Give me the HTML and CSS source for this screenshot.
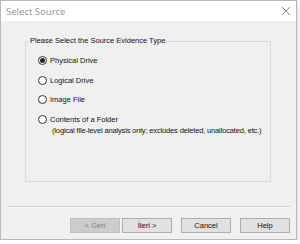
FILE: index.html
```html
<!DOCTYPE html>
<html>
<head>
<meta charset="utf-8">
<link rel="stylesheet" href="styles.css">
</head>
<body>
<div class="window">
  <div class="titlebar">
    <span class="title">Select Source</span>
    <svg class="close" width="10" height="10" viewBox="0 0 10 10"><path d="M1 1L9 9M9 1L1 9" stroke="#8a8a8a" stroke-width="1"/></svg>
  </div>
  <div class="content">
    <div class="group">
      <div class="legend">Please Select the Source Evidence Type</div>
      <div class="options">
        <div class="opt"><span class="radio checked"></span><span>Physical Drive</span></div>
        <div class="opt"><span class="radio"></span><span>Logical Drive</span></div>
        <div class="opt"><span class="radio"></span><span>Image File</span></div>
        <div class="opt"><span class="radio"></span><span>Contents of a Folder</span></div>
        <div class="note">(logical file-level analysis only; excludes deleted, unallocated, etc.)</div>
      </div>
    </div>
    <div class="sep"></div>
    <div class="buttons">
      <div class="pair">
        <button class="btn disabled">&lt; Geri</button>
        <button class="btn">İleri &gt;</button>
      </div>
      <button class="btn">Cancel</button>
      <button class="btn">Help</button>
    </div>
  </div>
</div>
</body>
</html>
```
FILE: styles.css
```css
html, body { margin: 0; padding: 0; background: #ffffff; }
body { font-family: "Liberation Sans", Arial, sans-serif; font-size: 7.5px; color: #111; }
.window {
  width: 297px; height: 240px; box-sizing: border-box;
  border: 1px solid #b8b8b8; background: #f0f0f0;
  display: flex; flex-direction: column;
  box-shadow: 1px 2px 3px rgba(0,0,0,0.15);
}
.titlebar {
  height: 20px; background: #fff; display: flex; align-items: center;
  justify-content: space-between; padding: 0 5px 0 5px;
}
.title { color: #9a9a9a; font-family: "Noto Sans", sans-serif; font-size: 9.5px; }
.content { flex: 1; display: flex; flex-direction: column; padding: 20px 6px 0 7px; }
.group {
  margin-left: 17px; width: 246px; height: 141px; box-sizing: border-box;
  border: 1px solid #d9d9d9; position: relative;
}
.legend {
  position: absolute; top: -7px; left: 3px; background: #f0f0f0; padding: 0 1px; line-height: 12px;
}
.options { display: flex; flex-direction: column; padding: 9px 0 0 12px; }
.opt { display: flex; align-items: center; gap: 3px; height: 19.5px; }
.radio {
  width: 9px; height: 9px; box-sizing: border-box; border: 1px solid #333; border-radius: 50%;
  background: #fff; display: flex; align-items: center; justify-content: center;
}
.radio.checked::after { content: ""; width: 5px; height: 5px; border-radius: 50%; background: #222; }
.note { padding-left: 14px; margin-top: -3px; white-space: nowrap; letter-spacing: -0.15px; }
.sep { margin-top: 24px; height: 1px; background: #cfcfcf; border-bottom: 1px solid #fafafa; }
.buttons { display: flex; justify-content: flex-end; gap: 9px; margin-top: 10px; }
.pair { display: flex; gap: 2px; }
.btn {
  width: 50px; height: 15px; box-sizing: border-box; border: 1px solid #adadad; background: #e1e1e1;
  font-family: inherit; font-size: 7.5px; padding: 0; color: #111;
}
.btn.disabled { background: #cccccc; border-color: #bfbfbf; color: #838383; }
```
